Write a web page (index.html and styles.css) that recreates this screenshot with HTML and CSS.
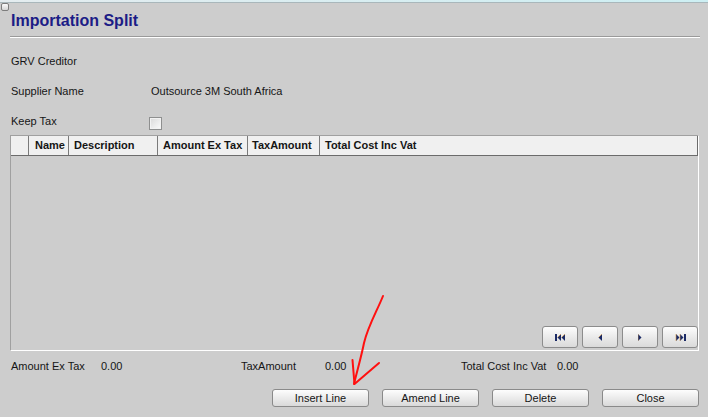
FILE: index.html
```html
<!DOCTYPE html>
<html lang="en">
<head>
    <meta charset="UTF-8">
    <title>Importation Split</title>
    <link rel="stylesheet" href="styles.css">
</head>
<body>
    <div class="window">
        <div class="titlebar"><span class="sysbox"></span></div>

        <div class="dialog">
            <h1 class="heading">Importation Split</h1>

            <div class="form">
                <div class="field">
                    <span class="label">GRV Creditor</span>
                    <span class="value"></span>
                </div>
                <div class="field">
                    <span class="label">Supplier Name</span>
                    <span class="value">Outsource 3M South Africa</span>
                </div>
                <div class="field field-last">
                    <span class="label">Keep Tax</span>
                    <span class="check"></span>
                </div>
            </div>

            <div class="grid">
                <div class="grid-head">
                    <div class="col col-sel"></div>
                    <div class="col col-name">Name</div>
                    <div class="col col-desc">Description</div>
                    <div class="col col-amount">Amount Ex Tax</div>
                    <div class="col col-tax">TaxAmount</div>
                    <div class="col col-total">Total Cost Inc Vat</div>
                </div>
                <div class="grid-body"></div>
                <div class="grid-nav">
                    <button class="nav-btn" title="First">
                        <svg width="11" height="7" viewBox="0 0 11 7"><rect x="0" y="0" width="2" height="7" fill="#1b2a66"/><path d="M6 0 L2.5 3.5 L6 7 Z" fill="#1b2a66"/><path d="M10 0 L6.5 3.5 L10 7 Z" fill="#1b2a66"/><path d="M2.5 3.5 L6 0 M6.5 3.5 L10 0" stroke="#e0a040" stroke-width="0.6"/></svg>
                    </button>
                    <button class="nav-btn" title="Previous">
                        <svg width="4" height="7" viewBox="0 0 4 7"><path d="M4 0 L0.5 3.5 L4 7 Z" fill="#1b2a66"/><path d="M0.5 3.5 L4 0" stroke="#e0a040" stroke-width="0.6"/></svg>
                    </button>
                    <button class="nav-btn" title="Next">
                        <svg width="4" height="7" viewBox="0 0 4 7"><path d="M0 0 L3.5 3.5 L0 7 Z" fill="#1b2a66"/><path d="M0 0 L0 7" stroke="#e0a040" stroke-width="0.6"/></svg>
                    </button>
                    <button class="nav-btn" title="Last">
                        <svg width="11" height="7" viewBox="0 0 11 7"><path d="M1 0 L4.5 3.5 L1 7 Z" fill="#1b2a66"/><path d="M5 0 L8.5 3.5 L5 7 Z" fill="#1b2a66"/><rect x="9" y="0" width="2" height="7" fill="#1b2a66"/><path d="M1 0 L1 7 M5 0 L5 7" stroke="#e0a040" stroke-width="0.6"/></svg>
                    </button>
                </div>
            </div>

            <div class="totals">
                <span>Amount Ex Tax</span>
                <span>0.00</span>
                <span>TaxAmount</span>
                <span>0.00</span>
                <span>Total Cost Inc Vat</span>
                <span>0.00</span>
            </div>

            <div class="actions">
                <button class="btn">Insert Line</button>
                <button class="btn">Amend Line</button>
                <button class="btn">Delete</button>
                <button class="btn">Close</button>
            </div>
        </div>

        <!-- hand drawn red arrow pointing at Insert Line -->
        <svg class="annotation" width="708" height="417" viewBox="0 0 708 417">
            <path d="M383 296 C377 311, 368 326, 364 343 C361 358, 357 371, 354 384" fill="none" stroke="#ff1010" stroke-width="2" stroke-linecap="round"/>
            <path d="M352.5 360 L354.5 384 L379 363" fill="none" stroke="#ff1010" stroke-width="2" stroke-linecap="round" stroke-linejoin="round"/>
        </svg>
    </div>
</body>
</html>
```

FILE: styles.css
```css
* {
    box-sizing: border-box;
}

body {
    margin: 0;
    background-color: #cdcdcd;
    color: #151515;
    font-family: 'Liberation Sans', Arial, sans-serif;
    font-size: 11px;
}

.window {
    position: relative;
    width: 708px;
    height: 417px;
    overflow: hidden;
}

.titlebar {
    height: 3px;
    background: linear-gradient(90deg, #e4ecef, #cdeff3);
    border-bottom: 1px solid #a9b7bb;
}

.sysbox {
    position: absolute;
    left: 1px;
    top: 3px;
    width: 8px;
    height: 8px;
    border: 1px solid #7d7d7d;
    border-radius: 2px;
    background: linear-gradient(#fafafa, #d6d6d6);
}

.dialog {
    padding: 8px 8px 0 10px;
}

.heading {
    margin: 0;
    padding: 0 0 5px 1px;
    font-size: 16px;
    line-height: 20px;
    font-weight: bold;
    color: #1c1c86;
    border-bottom: 1px solid #9a9a9a;
    box-shadow: 0 1px 0 #ffffff;
}

.form {
    margin-top: 9px;
    padding-left: 1px;
}

.field {
    display: flex;
    align-items: center;
    height: 30px;
}

.field-last {
    height: 29px;
}

.label {
    width: 140px;
    flex: none;
}

.check {
    width: 13px;
    height: 13px;
    margin: 5px 0 0 -2px;
    border: 1px solid #8e8f8f;
    background: linear-gradient(135deg, #d9d9d9, #fbfbfb);
    box-shadow: inset 0 0 0 1px #f2f2f2;
}

.grid {
    display: flex;
    flex-direction: column;
    height: 216px;
    margin-right: 1px;
    border: 1px solid;
    border-color: #a0a0a0 #ffffff #ffffff #a0a0a0;
}

.grid-head {
    display: flex;
    height: 20px;
    background-color: #f0f0f0;
    border-bottom: 1px solid #6b6b6b;
    border-right: 1px solid #6b6b6b;
    font-weight: bold;
}

.col {
    flex: none;
    padding-left: 5px;
    line-height: 19px;
    white-space: nowrap;
    border-right: 1px solid #7a7a7a;
}

.col-sel { width: 18px; }
.col-name { width: 40px; padding-left: 6px; }
.col-desc { width: 89px; }
.col-amount { width: 90px; }
.col-tax { width: 72px; padding-left: 4px; }

.col-total {
    flex: 1;
    border-right: none;
}

.grid-body {
    flex: 1;
}

.grid-nav {
    display: flex;
    justify-content: flex-end;
    gap: 4px;
    padding-bottom: 2px;
}

.nav-btn {
    display: flex;
    align-items: center;
    justify-content: center;
    width: 36px;
    height: 22px;
    padding: 0;
    border: 1px solid #8c8c8c;
    border-radius: 3px;
    background: linear-gradient(#fdfdfd, #ececec 45%, #dadada);
}

.totals {
    display: grid;
    grid-template-columns: 90px 140px 84px 136px 96px auto;
    align-items: center;
    height: 30px;
    padding-left: 1px;
}

.actions {
    display: flex;
    justify-content: flex-end;
    gap: 13px;
    margin: 8px 1px 0 0;
}

.btn {
    width: 97px;
    height: 18px;
    padding: 0;
    border: 1px solid #8a8a8a;
    border-radius: 3px;
    background: linear-gradient(#fdfdfd, #ededed 45%, #d9d9d9);
    color: #151515;
    font-family: 'Liberation Sans', Arial, sans-serif;
    font-size: 11px;
    line-height: 16px;
}

.annotation {
    position: absolute;
    left: 0;
    top: 0;
    pointer-events: none;
}
```
